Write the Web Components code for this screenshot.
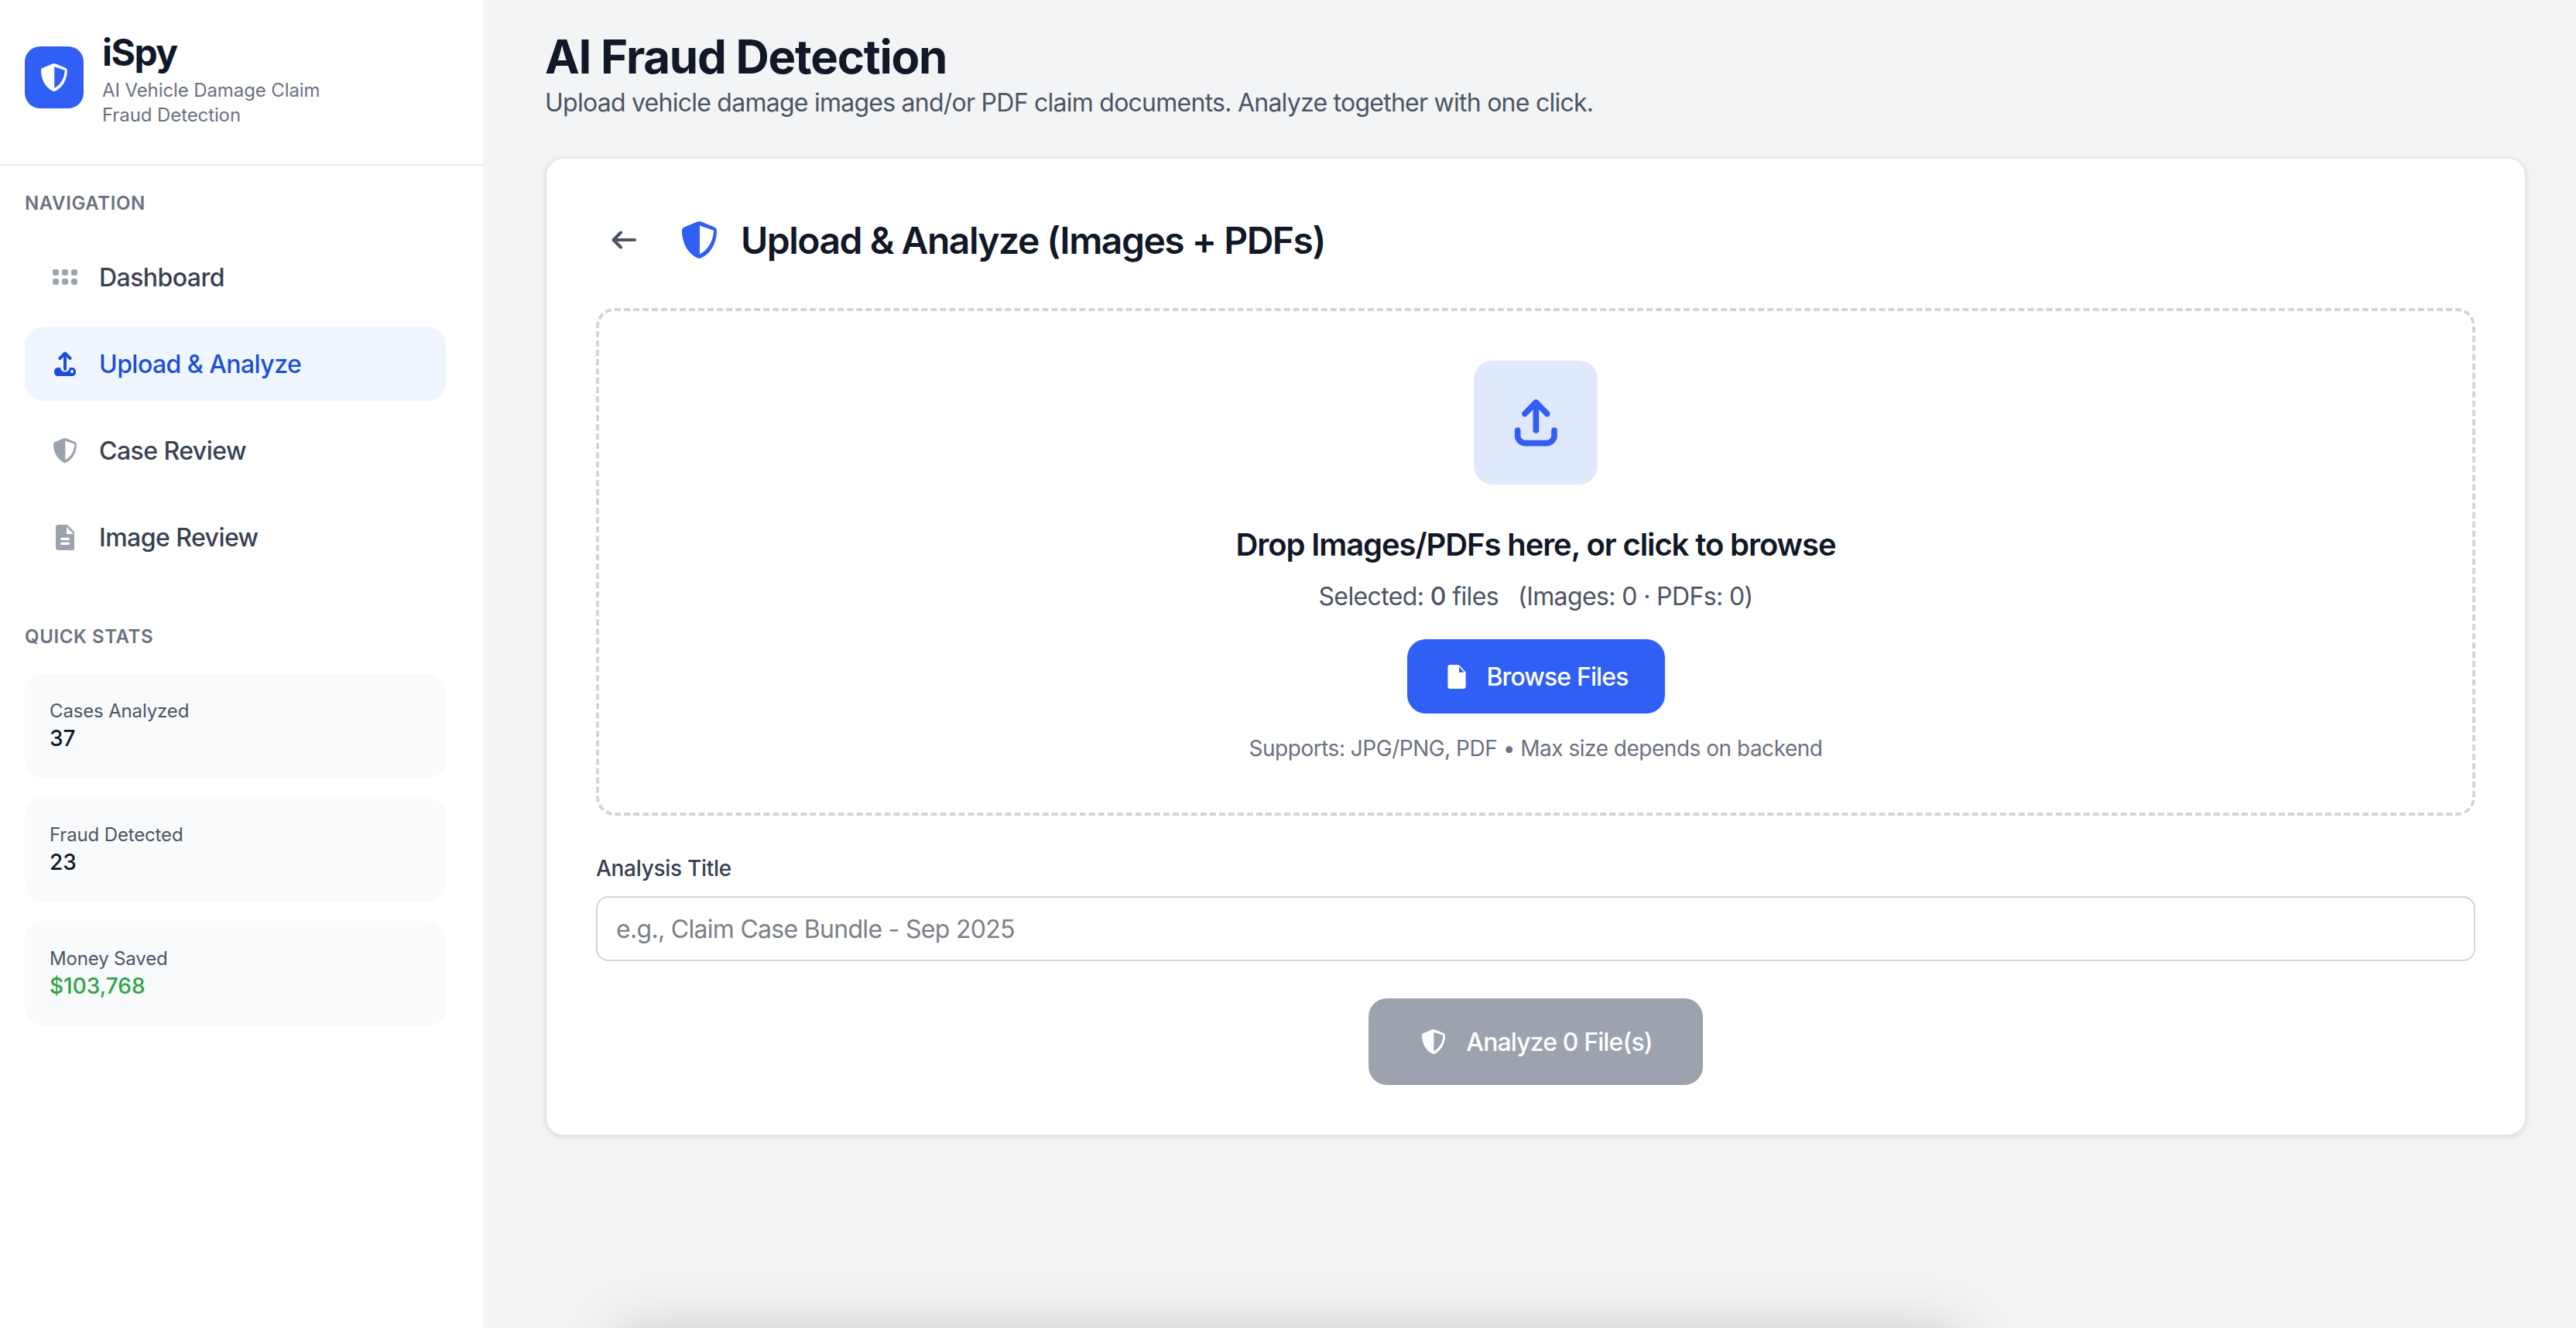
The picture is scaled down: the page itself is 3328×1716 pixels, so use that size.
<!DOCTYPE html>
<html lang="en">
<head>
<meta charset="utf-8">
<title>iSpy - AI Fraud Detection</title>
<style>
html,body{margin:0;height:100%;overflow:hidden;background:#f3f4f6;}
body{font-family:Inter,"Liberation Sans",sans-serif;color:#111827;}
</style>
</head>
<body>
<app-shell>
    <side-bar slot="side">
        <nav-item icon="grid" label="Dashboard"></nav-item>
        <nav-item icon="upload" label="Upload &amp; Analyze" active></nav-item>
        <nav-item icon="shield" label="Case Review"></nav-item>
        <nav-item icon="doc" label="Image Review"></nav-item>
        <stat-card slot="stats" label="Cases Analyzed" value="37"></stat-card>
        <stat-card slot="stats" label="Fraud Detected" value="23"></stat-card>
        <stat-card slot="stats" label="Money Saved" value="$103,768" tone="good"></stat-card>
    </side-bar>
    <upload-panel></upload-panel>
</app-shell>
<toast-shadow></toast-shadow>

<script>
const ICONS = {
    grid: `<svg viewBox="0 0 32 20" width="32" height="20" fill="currentColor"><rect x="0" y="0" width="8" height="8" rx="3"/><rect x="12" y="0" width="8" height="8" rx="3"/><rect x="24" y="0" width="8" height="8" rx="3"/><rect x="0" y="12" width="8" height="8" rx="3"/><rect x="12" y="12" width="8" height="8" rx="3"/><rect x="24" y="12" width="8" height="8" rx="3"/></svg>`,
    upload: `<svg viewBox="0 0 28 32" width="28" height="32" fill="none"><path d="M14 23V2.500M7.500 9L14 2.500 20.500 9" stroke="currentColor" stroke-width="4" stroke-linecap="round" stroke-linejoin="round"/><path fill="currentColor" fill-rule="evenodd" d="M4.500 21H8c.5 3 2.500 5.500 6 5.500s5.500-2.500 6-5.500h3.500C26 21 28 23.400 28 26.500S26 32 23.500 32h-19C2 32 0 29.600 0 26.500S2 21 4.500 21zM23 24a2 2 0 1 0 0 4 2 2 0 0 0 0-4z"/></svg>`,
    shield: `<svg viewBox="0 0 45 48" width="100%" height="100%" preserveAspectRatio="none" fill="currentColor"><path fill-rule="evenodd" d="M22.500 0c1 0 2 .3 3 .7L42 7.500c1.800.8 3 2.500 3 4.300C45 26 39 41 24.500 47.500c-1.300.6-2.700.6-4 0C6 41 0 26 0 11.800c0-1.800 1.200-3.500 3-4.300L19.500.7c1-.4 2-.7 3-.7zM23 5.500v37C34 37 40.500 25 41 11.800z"/></svg>`,
    doc: `<svg viewBox="0 0 24.700 33" width="24.700" height="33" fill="currentColor"><path fill-rule="evenodd" d="M3 0h12l9.700 10v20c0 1.700-1.300 3-3 3H3c-1.700 0-3-1.300-3-3V3c0-1.700 1.300-3 3-3zm11 3v9h9zM7.800 16.700a1.600 1.600 0 0 0 0 3.300h8.700a1.600 1.600 0 0 0 0-3.300zm0 6a1.600 1.600 0 0 0 0 3.300h8.700a1.600 1.600 0 0 0 0-3.300z"/></svg>`,
    file: `<svg viewBox="0 0 24.700 33" width="24" height="31" fill="currentColor"><path fill-rule="evenodd" d="M3 0h12l9.700 10v20c0 1.700-1.300 3-3 3H3c-1.700 0-3-1.300-3-3V3c0-1.700 1.300-3 3-3zm12.500 3v7.500h7.300z"/></svg>`,
    back: `<svg viewBox="0 0 32 24" width="32" height="24" fill="none" stroke="currentColor" stroke-width="4" stroke-linecap="round" stroke-linejoin="round"><path d="M30 12H3M12 2.500L2.500 12l9.500 9.500"/></svg>`,
    tray: `<svg viewBox="0 0 24 24" width="80" height="80" fill="none" stroke="currentColor" stroke-width="2.300" stroke-linecap="round" stroke-linejoin="round"><path d="M12.100 15V4.200M7.800 8.600l4.300-4.400 4.300 4.400"/><path d="M5 15v2a3 3 0 0 0 3 3h8.200a3 3 0 0 0 3-3v-2"/></svg>`
};

class ShieldIcon extends HTMLElement {
    constructor() {
        super();
        this.attachShadow({ mode: 'open' }).innerHTML = `
        <style>
        :host{
            display:inline-block;
            height:var(--size,32px);
            width:calc(var(--size,32px) * .9375);
            flex:none;
            line-height:0;
        }
        </style>
        ${ICONS.shield}`;
    }
}

class NavItem extends HTMLElement {
    constructor() {
        super();
        const icon = this.getAttribute('icon');
        this.attachShadow({ mode: 'open' }).innerHTML = `
        <style>
        :host{
            display:flex;
            align-items:center;
            height:96px;
            padding:0 32px;
            gap:24px;
            box-sizing:border-box;
            border-radius:24px;
            font-size:32px;
            font-weight:500;
            letter-spacing:-.55px;
            color:#374151;
        }
        :host([active]){ background:#eff6ff; color:#1d4ed8; }
        .ico{ width:40px; display:flex; justify-content:center; align-items:center; color:#9ca3af; --size:32px; }
        :host([active]) .ico{ color:#1d4ed8; }
        </style>
        <span class="ico">${icon === 'shield' ? '<shield-icon></shield-icon>' : ICONS[icon]}</span>
        <span>${this.getAttribute('label').replace('&', '&amp;')}</span>`;
    }
}

class StatCard extends HTMLElement {
    constructor() {
        super();
        this.attachShadow({ mode: 'open' }).innerHTML = `
        <style>
        :host{
            display:block;
            padding:32px;
            height:136px;
            box-sizing:border-box;
            border-radius:24px;
            background:#f9fafb;
        }
        .label{ font-size:24px; line-height:32px; color:#4b5563; letter-spacing:-.15px; position:relative; top:1px; }
        .value{ font-size:28px; line-height:40px; font-weight:500; color:#111827; }
        :host([tone="good"]) .value{ color:#30a348; }
        </style>
        <div class="label">${this.getAttribute('label')}</div>
        <div class="value">${this.getAttribute('value')}</div>`;
    }
}

class SideBar extends HTMLElement {
    constructor() {
        super();
        this.attachShadow({ mode: 'open' }).innerHTML = `
        <style>
        :host{
            display:block;
            width:624px;
            height:1716px;
            flex:none;
            background:#fff;
        }
        header{
            display:flex;
            gap:24px;
            align-items:center;
            height:214px;
            padding:0 32px 12px;
            box-sizing:border-box;
            border-bottom:2px solid #e5e7eb;
        }
        .logo{
            width:76px;
            height:80px;
            flex:none;
            border-radius:20px;
            background:#2f5ff5;
            color:#fff;
            display:flex;
            align-items:center;
            justify-content:center;
            --size:36px;
        }
        h1{ margin:0; font-size:48px; line-height:64px; font-weight:700; color:#111827; letter-spacing:-1.500px; }
        .sub{ font-size:24px; line-height:32px; color:#6b7280; letter-spacing:-.1px; padding-top:1px; }
        .body{ padding:33px 48px 0 32px; }
        h2{
            margin:0;
            font-size:24px;
            line-height:32px;
            font-weight:600;
            letter-spacing:.6px;
            color:#6b7280;
        }
        .nav{ display:grid; gap:16px; margin:31px 0 65px; }
        .stats{ display:grid; gap:24px; margin-top:31px; }
        </style>
        <header>
            <div class="logo"><shield-icon></shield-icon></div>
            <div>
                <h1>iSpy</h1>
                <div class="sub">AI Vehicle Damage Claim<br>Fraud Detection</div>
            </div>
        </header>
        <div class="body">
            <h2>NAVIGATION</h2>
            <div class="nav"><slot></slot></div>
            <h2>QUICK STATS</h2>
            <div class="stats"><slot name="stats"></slot></div>
        </div>`;
    }
}

class ActionButton extends HTMLElement {
    constructor() {
        super();
        this.attachShadow({ mode: 'open' }).innerHTML = `
        <style>
        :host{
            display:flex;
            align-items:center;
            justify-content:center;
            gap:var(--gap,24px);
            width:var(--w,333px);
            height:var(--h,96px);
            padding-left:var(--pl,0);
            box-sizing:border-box;
            border-radius:24px;
            background:var(--bg,#2f5ff5);
            color:#fff;
            font-size:32px;
            font-weight:500;
            letter-spacing:-.88px;
            cursor:pointer;
        }
        </style>
        <slot name="icon"></slot>
        <slot></slot>`;
    }
}

class DropZone extends HTMLElement {
    constructor() {
        super();
        this.attachShadow({ mode: 'open' }).innerHTML = `
        <style>
        :host{
            display:flex;
            flex-direction:column;
            align-items:center;
            height:656px;
            padding-top:64px;
            box-sizing:border-box;
            border:4px dashed #d1d5db;
            border-radius:24px;
        }
        .tile{
            width:160px;
            height:160px;
            border-radius:24px;
            background:#dfe9fb;
            color:#2f5ff5;
            display:flex;
            align-items:center;
            justify-content:center;
        }
        h3{ margin:50px 0 0; font-size:40px; line-height:56px; font-weight:600; color:#111827; letter-spacing:-1.100px; }
        .sel{ margin-top:15px; margin-bottom:-1px; font-size:32px; line-height:48px; color:#4b5563; white-space:pre; letter-spacing:-.62px; }
        .sel b{ font-weight:500; }
        .browse{ margin-top:32px; --pl:6px; --gap:26px; }
        .note{ margin-top:25px; font-size:28px; line-height:40px; color:#6b7280; letter-spacing:-.49px; }
        </style>
        <div class="tile">${ICONS.tray}</div>
        <h3>Drop Images/PDFs here, or click to browse</h3>
        <div class="sel">Selected: <b>0</b> files   (Images: 0 · PDFs: 0)</div>
        <action-button class="browse"><span slot="icon" style="display:flex">${ICONS.file}</span>Browse Files</action-button>
        <div class="note">Supports: JPG/PNG, PDF • Max size depends on backend</div>`;
    }
}

class UploadPanel extends HTMLElement {
    constructor() {
        super();
        this.attachShadow({ mode: 'open' }).innerHTML = `
        <style>
        :host{
            display:block;
            flex:1;
            min-width:0;
            padding:37px 64px 0 80px;
        }
        h1{ margin:0; font-size:60px; line-height:72px; font-weight:700; color:#111827; letter-spacing:-1.250px; }
        .lead{ font-size:32px; line-height:48px; color:#4b5563; letter-spacing:-.75px; }
        .card{
            margin-top:46px;
            padding:64px;
            border:2px solid #e5e7eb;
            border-radius:24px;
            background:#fff;
            box-shadow:0 2px 6px rgba(0,0,0,.1);
        }
        .head{ display:flex; align-items:center; height:82px; margin-bottom:47px; color:#111827; }
        .back{ width:32px; margin-left:20px; margin-right:59px; color:#4b5563; display:flex; }
        .head shield-icon{ --size:48px; color:#2f5ff5; margin-right:31px; }
        h2{ margin:0; font-size:48px; font-weight:600; letter-spacing:-1.500px; }
        label{ display:block; margin-top:48px; font-size:28px; line-height:40px; font-weight:500; color:#374151; letter-spacing:-.3px; }
        input{
            display:block;
            width:100%;
            height:84px;
            margin-top:16px;
            padding:0 24px;
            box-sizing:border-box;
            border:2px solid #d1d5db;
            border-radius:16px;
            background:#fff;
            font:inherit;
            font-size:32px;
            letter-spacing:-.7px;
            color:#111827;
            outline:none;
        }
        input::placeholder{ color:#7b8088; opacity:1; }
        .go{ display:flex; justify-content:center; margin-top:48px; }
        .go action-button{ --w:432px; --h:112px; --bg:#9ca3af; --gap:27px; --pl:4px; }
        .go shield-icon{ --size:32px; }
        </style>
        <h1>AI Fraud Detection</h1>
        <div class="lead">Upload vehicle damage images and/or PDF claim documents. Analyze together with one click.</div>
        <div class="card">
            <div class="head">
                <span class="back">${ICONS.back}</span>
                <shield-icon></shield-icon>
                <h2>Upload &amp; Analyze (Images + PDFs)</h2>
            </div>
            <drop-zone></drop-zone>
            <label for="title">Analysis Title</label>
            <input id="title" type="text" placeholder="e.g., Claim Case Bundle - Sep 2025">
            <div class="go">
                <action-button><shield-icon slot="icon"></shield-icon>Analyze 0 File(s)</action-button>
            </div>
        </div>`;
    }
}

class AppShell extends HTMLElement {
    constructor() {
        super();
        this.attachShadow({ mode: 'open' }).innerHTML = `
        <style>
        :host{ display:flex; width:100%; height:1716px; background:#f3f4f6; }
        </style>
        <slot name="side"></slot>
        <slot></slot>`;
    }
}

// something sits just under the fold in the original, only its shadow shows
class ToastShadow extends HTMLElement {
    constructor() {
        super();
        this.attachShadow({ mode: 'open' }).innerHTML = `
        <style>
        :host{
            position:fixed;
            left:790px;
            top:1716px;
            width:1750px;
            height:80px;
            border-radius:24px;
            box-shadow:0 0 70px rgba(0,0,0,.16);
        }
        </style>`;
    }
}

customElements.define('shield-icon', ShieldIcon);
customElements.define('nav-item', NavItem);
customElements.define('stat-card', StatCard);
customElements.define('side-bar', SideBar);
customElements.define('action-button', ActionButton);
customElements.define('drop-zone', DropZone);
customElements.define('upload-panel', UploadPanel);
customElements.define('app-shell', AppShell);
customElements.define('toast-shadow', ToastShadow);
</script>
</body>
</html>
